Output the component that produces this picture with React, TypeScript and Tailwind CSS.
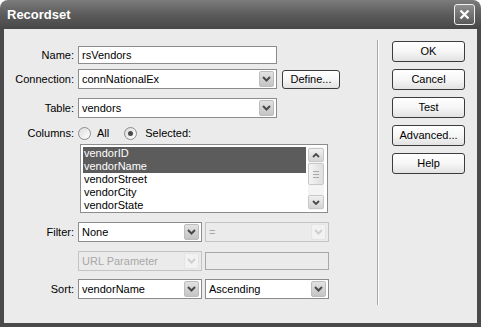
import React from 'react'

function Chevron({ disabled }: { disabled?: boolean }) {
  return (
    <svg width="9" height="6" viewBox="0 0 9 6">
      <polyline
        points="1,1 4.5,4.5 8,1"
        fill="none"
        stroke={disabled ? '#cfcfcf' : '#4a4a4a'}
        strokeWidth="2"
      />
    </svg>
  )
}

function Select({ value, className, disabled }: { value: string; className: string; disabled?: boolean }) {
  return (
    <div
      className={[
        'flex items-center border pl-[3px] pr-[2px]',
        disabled ? 'border-[#c4c4c4] bg-[#ebebeb] text-[#a8a8a8]' : 'border-[#8c8c8c] bg-white text-black',
        className
      ].join(' ')}
    >
      <div className="flex-1 truncate leading-none">{value}</div>
      <div
        className={[
          'grid h-[16px] w-[15px] place-items-center rounded-[2px] border',
          disabled
            ? 'border-[#e4e4e4] bg-[#f2f2f2]'
            : 'border-[#bdbdbd] bg-gradient-to-b from-[#e2e2e2] to-[#c4c4c4]'
        ].join(' ')}
      >
        <Chevron disabled={disabled} />
      </div>
    </div>
  )
}

function Btn({ label, className }: { label: string; className: string }) {
  return (
    <div
      className={[
        'grid place-items-center rounded-[3px] border border-[#3c3c3c] bg-gradient-to-b from-white via-[#f6f6f6] to-[#e2e2e2] leading-none text-black',
        className
      ].join(' ')}
    >
      {label}
    </div>
  )
}

function Radio({ checked }: { checked?: boolean }) {
  return (
    <div className="grid h-[13px] w-[13px] place-items-center rounded-full border border-[#8c8c8c] bg-gradient-to-br from-[#dcdcdc] to-white">
      {checked && <div className="h-[5px] w-[5px] rounded-full bg-[#4a4a4a]" />}
    </div>
  )
}

function Label({ text }: { text: string }) {
  return <div className="w-[70px] text-right leading-none">{text}</div>
}

const columns = ['vendorID', 'vendorName', 'vendorStreet', 'vendorCity', 'vendorState']

export default function App() {
  return (
    <div className="flex h-[327px] w-[481px] flex-col bg-white font-['Liberation_Sans',Arial,sans-serif] text-[11px]">
      {/* Title bar */}
      <div className="flex h-[29px] items-center rounded-t-[8px] bg-gradient-to-b from-[#7c7c7c] via-[#5c5c5c] to-[#474747] pl-[7px] pr-[6px]">
        <div className="text-[13px] font-bold text-white">Recordset</div>
        <div className="ml-auto grid h-[21px] w-[21px] place-items-center rounded-[3px] border border-[#f0f0f0] bg-gradient-to-b from-[#8e8e8e] to-[#5a5a5a]">
          <svg width="11" height="11" viewBox="0 0 11 11">
            <path d="M1.5 1.5 L9.5 9.5 M9.5 1.5 L1.5 9.5" stroke="white" strokeWidth="2.2" />
          </svg>
        </div>
      </div>

      {/* Client */}
      <div className="flex flex-1 bg-[#4a4a4a] px-[4px] pb-[4px]">
        <div className="flex flex-1 bg-[#ebebeb]">
          {/* Form */}
          <div className="flex w-[373px] flex-col">
            <div className="mt-[17px] flex h-[18px] items-center">
              <Label text="Name:" />
              <div className="ml-[4px] flex h-full w-[199px] items-center border border-[#8c8c8c] bg-white pl-[3px] leading-none">
                rsVendors
              </div>
            </div>

            <div className="mt-[5px] flex h-[20px] items-center">
              <Label text="Connection:" />
              <Select value="connNationalEx" className="ml-[4px] h-full w-[199px]" />
              <Btn label="Define..." className="ml-[5px] h-[19px] w-[58px]" />
            </div>

            <div className="mt-[9px] flex h-[20px] items-center">
              <Label text="Table:" />
              <Select value="vendors" className="ml-[4px] h-full w-[199px]" />
            </div>

            <div className="mt-[8px] flex h-[14px] items-center">
              <Label text="Columns:" />
              <div className="ml-[4px]">
                <Radio />
              </div>
              <div className="ml-[6px] leading-none">All</div>
              <div className="ml-[15px]">
                <Radio checked />
              </div>
              <div className="ml-[8px] leading-none">Selected:</div>
            </div>

            <div className="ml-[76px] mt-[4px] flex h-[69px] w-[248px] border border-[#8c8c8c] bg-white p-[2px]">
              <div className="flex flex-1 flex-col">
                {columns.map((c, i) => (
                  <div
                    key={c}
                    className={[
                      'flex h-[13px] shrink-0 items-center pl-[1px] leading-none',
                      i < 2 ? 'bg-[#5c5c5c] text-white' : 'text-black'
                    ].join(' ')}
                  >
                    {c}
                  </div>
                ))}
              </div>
              <div className="ml-[2px] mr-[1px] flex w-[16px] flex-col bg-[#f4f4f4] py-[1px]">
                <div className="grid h-[14px] place-items-center rounded-[2px] border border-[#c8c8c8] bg-gradient-to-b from-[#f0f0f0] to-[#d4d4d4]">
                  <svg width="8" height="5" viewBox="0 0 8 5">
                    <polyline points="1,4 4,1 7,4" fill="none" stroke="#4a4a4a" strokeWidth="1.8" />
                  </svg>
                </div>
                <div className="mt-[1px] flex h-[22px] flex-col items-center justify-center gap-[2px] rounded-[2px] border border-[#c8c8c8] bg-gradient-to-r from-[#f4f4f4] to-[#dedede]">
                  <div className="h-px w-[6px] bg-[#a8a8a8]" />
                  <div className="h-px w-[6px] bg-[#a8a8a8]" />
                  <div className="h-px w-[6px] bg-[#a8a8a8]" />
                </div>
                <div className="mt-auto grid h-[14px] place-items-center rounded-[2px] border border-[#c8c8c8] bg-gradient-to-b from-[#f0f0f0] to-[#d4d4d4]">
                  <svg width="8" height="5" viewBox="0 0 8 5">
                    <polyline points="1,1 4,4 7,1" fill="none" stroke="#4a4a4a" strokeWidth="1.8" />
                  </svg>
                </div>
              </div>
            </div>

            <div className="mt-[9px] flex h-[20px] items-center">
              <Label text="Filter:" />
              <Select value="None" className="ml-[4px] h-full w-[124px]" />
              <Select value="=" className="ml-[3px] h-full w-[124px]" disabled />
            </div>

            <div className="mt-[9px] flex h-[20px] items-center">
              <div className="w-[70px]" />
              <Select value="URL Parameter" className="ml-[4px] h-full w-[124px]" disabled />
              <div className="ml-[3px] h-[18px] w-[124px] border border-[#a8a8a8] bg-[#ebebeb]" />
            </div>

            <div className="mt-[8px] flex h-[20px] items-center">
              <Label text="Sort:" />
              <Select value="vendorName" className="ml-[4px] h-full w-[124px]" />
              <Select value="Ascending" className="ml-[3px] h-full w-[124px]" />
            </div>
          </div>

          {/* Separator */}
          <div className="mb-[18px] mt-[11px] flex w-[2px]">
            <div className="w-px bg-[#a6a6a6]" />
            <div className="w-px bg-white" />
          </div>

          {/* Buttons */}
          <div className="flex flex-col gap-[7px] pl-[13px] pt-[12px]">
            <Btn label="OK" className="h-[21px] w-[73px]" />
            <Btn label="Cancel" className="h-[21px] w-[73px]" />
            <Btn label="Test" className="h-[21px] w-[73px]" />
            <Btn label="Advanced..." className="h-[21px] w-[73px]" />
            <Btn label="Help" className="h-[21px] w-[73px]" />
          </div>
        </div>
      </div>
    </div>
  )
}
